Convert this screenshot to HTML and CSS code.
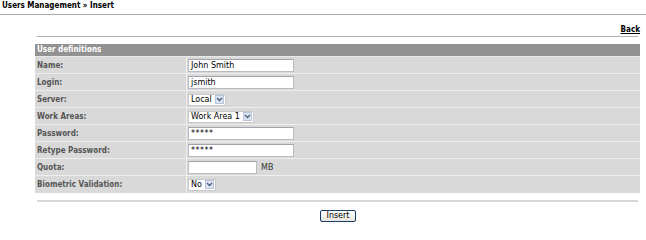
FILE: index.html
```html
<!DOCTYPE html>
<html>
<head>
<meta charset="utf-8">
<link rel="stylesheet" href="styles.css">
</head>
<body>
<div class="title">Users Management » Insert</div>
<div class="backrow"><a href="#" class="back">Back</a></div>
<div class="rule top"></div>
<div class="form">
  <div class="head">User definitions</div>
  <div class="row"><div class="lbl">Name:</div><div class="val"><span class="input w106">John Smith</span></div></div>
  <div class="row"><div class="lbl">Login:</div><div class="val"><span class="input w106">jsmith</span></div></div>
  <div class="row"><div class="lbl">Server:</div><div class="val"><span class="select"><span class="opt">Local</span><span class="arrow"><svg width="7" height="5" viewBox="0 0 7 5"><path d="M1 1 L3.5 3.5 L6 1" fill="none" stroke="#4d6185" stroke-width="1.4"/></svg></span></span></div></div>
  <div class="row"><div class="lbl">Work Areas:</div><div class="val"><span class="select"><span class="opt">Work Area 1</span><span class="arrow"><svg width="7" height="5" viewBox="0 0 7 5"><path d="M1 1 L3.5 3.5 L6 1" fill="none" stroke="#4d6185" stroke-width="1.4"/></svg></span></span></div></div>
  <div class="row"><div class="lbl">Password:</div><div class="val"><span class="input w106 pw">*****</span></div></div>
  <div class="row"><div class="lbl">Retype Password:</div><div class="val"><span class="input w106 pw">*****</span></div></div>
  <div class="row"><div class="lbl">Quota:</div><div class="val"><span class="input w69"></span><span class="unit">MB</span></div></div>
  <div class="row"><div class="lbl">Biometric Validation:</div><div class="val"><span class="select"><span class="opt">No</span><span class="arrow"><svg width="7" height="5" viewBox="0 0 7 5"><path d="M1 1 L3.5 3.5 L6 1" fill="none" stroke="#4d6185" stroke-width="1.4"/></svg></span></span></div></div>
</div>
<div class="rule bottom"></div>
<div class="actions"><button class="btn">Insert</button></div>
</body>
</html>
```
FILE: styles.css
```css
html, body {
  margin: 0;
  padding: 0;
  background: #fff;
}
body {
  font-family: "DejaVu Sans Condensed", "DejaVu Sans", Verdana, sans-serif;
  font-size: 8px;
  color: #000;
}
.title {
  font-weight: bold;
  height: 14px;
  line-height: 11px;
  padding-left: 2px;
  border-bottom: 1px solid #a8a8a8;
}
.backrow {
  height: 21px;
  display: flex;
  justify-content: flex-end;
  align-items: flex-end;
  padding-right: 6px;
}
.back {
  color: #000;
  font-weight: bold;
  text-decoration: underline;
  line-height: 12px;
}
.rule {
  margin-left: 37px;
  margin-right: 8px;
}
.rule.top {
  height: 0;
  border-top: 1px solid #b4b4b4;
  margin-bottom: 7px;
}
.form {
  margin-left: 35px;
  width: 605px;
  display: flex;
  flex-direction: column;
}
.head {
  background: #929292;
  color: #fff;
  font-weight: bold;
  height: 12px;
  line-height: 12px;
  padding-left: 2px;
  border-bottom: 1px solid #e8e8e8;
}
.row {
  display: grid;
  grid-template-columns: 152px 1fr;
  height: 16px;
  border-bottom: 1px solid #eeeeee;
  background: #d9d9d9;
}
.row:last-child {
  border-bottom: none;
  height: 17px;
}
.lbl {
  color: #555;
  font-weight: bold;
  padding-left: 2px;
  line-height: 17px;
  border-right: 1px solid #eeeeee;
}
.val {
  display: flex;
  align-items: center;
  padding-left: 1px;
}
.input {
  display: inline-block;
  box-sizing: border-box;
  height: 13px;
  line-height: 11px;
  background: #fff;
  border: 1px solid #b9bdc1;
  border-top-color: #a0a4a8;
  padding-left: 2px;
  color: #000;
  font-family: "DejaVu Sans", Verdana, sans-serif;
  font-size: 8px;
}
.w106 { width: 106px; }
.w69 { width: 69px; }
.pw { letter-spacing: 0.5px; }
.unit {
  margin-left: 4px;
  color: #333;
  font-family: "DejaVu Sans", Verdana, sans-serif;
}
.select {
  display: inline-flex;
  align-items: center;
  box-sizing: border-box;
  height: 12px;
  background: #fff;
  border: 1px solid #c9c9c9;
  padding: 0 1px 0 2px;
}
.opt {
  font-family: "DejaVu Sans", Verdana, sans-serif;
  font-size: 8px;
  line-height: 10px;
  margin-right: 3px;
}
.arrow {
  display: inline-flex;
  align-items: center;
  justify-content: center;
  box-sizing: border-box;
  width: 9px;
  height: 9px;
  background: #dbe3ef;
  border: 1px solid #b9c6da;
}
.rule.bottom {
  height: 0;
  border-top: 2px solid #d8d8d8;
  margin-top: 7px;
}
.actions {
  display: flex;
  justify-content: center;
  padding-top: 8px;
  padding-left: 30px;
}
.btn {
  font-family: "DejaVu Sans", Verdana, sans-serif;
  font-size: 8px;
  color: #000;
  height: 12px;
  width: 36px;
  padding: 0;
  line-height: 10px;
  border: 1px solid #1c3c66;
  border-radius: 2px;
  background: linear-gradient(#ffffff, #e6e4dc);
}
```
